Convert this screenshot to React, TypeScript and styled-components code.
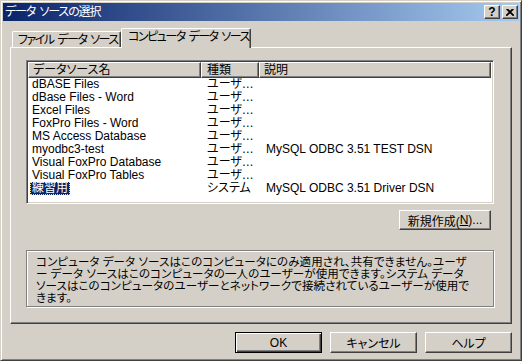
import React from "react";
import styled, { createGlobalStyle } from "styled-components";

const face = "#d4d0c8";
const shadow = "#808080";
const dark = "#404040";

const GlobalStyle = createGlobalStyle`
  html, body {
    margin: 0;
    padding: 0;
    background: ${face};
  }
  body {
    width: 522px;
    height: 361px;
    overflow: hidden;
    font-family: "Liberation Sans", "Noto Sans CJK JP", sans-serif;
    font-size: 12px;
    font-feature-settings: "palt";
    color: #000;
  }
  * {
    box-sizing: border-box;
  }
`;

const sources = [
  { name: "dBASE Files", kind: "ユーザ…", desc: "" },
  { name: "dBase Files - Word", kind: "ユーザ…", desc: "" },
  { name: "Excel Files", kind: "ユーザ…", desc: "" },
  { name: "FoxPro Files - Word", kind: "ユーザ…", desc: "" },
  { name: "MS Access Database", kind: "ユーザ…", desc: "" },
  { name: "myodbc3-test", kind: "ユーザ…", desc: "MySQL ODBC 3.51 TEST DSN" },
  { name: "Visual FoxPro Database", kind: "ユーザ…", desc: "" },
  { name: "Visual FoxPro Tables", kind: "ユーザ…", desc: "" },
  { name: "練習用", kind: "システム", desc: "MySQL ODBC 3.51 Driver DSN", selected: true },
];

const noteLines = [
  "コンピュータ データ ソースはこのコンピュータにのみ適用され、共有できません。ユーザ",
  "ー データ ソースはこのコンピュータの一人のユーザーが使用できます。システム データ",
  "ソースはこのコンピュータのユーザーとネットワークで接続されているユーザーが使用で",
  "きます。",
];

const App = () => (
  <>
    <GlobalStyle />
    <Window>
      <TitleBar>
        <Caption>データ ソースの選択</Caption>
        <CaptionButtons>
          <CaptionButton>
            <HelpMark>?</HelpMark>
          </CaptionButton>
          <CaptionButton>
            <svg width="8" height="7" viewBox="0 0 8 7">
              <path d="M0.5 0 L7.5 7 M1.5 0 L8 6.5 M7.5 0 L0.5 7 M6.5 0 L0 6.5" stroke="#000" strokeWidth="1.1" fill="none" />
            </svg>
          </CaptionButton>
        </CaptionButtons>
      </TitleBar>

      <Body>
        <TabStrip>
          <Tab $width={109}>ファイル データ ソース</Tab>
          <Tab $active $width={130}>コンピュータ データ ソース</Tab>
        </TabStrip>

        <Panel>
          <ListView>
            <HeaderRow>
              <HeaderCell $width={173}>データソース名</HeaderCell>
              <HeaderCell $width={58}>種類</HeaderCell>
              <HeaderCell $width={232}>説明</HeaderCell>
            </HeaderRow>
            {sources.map((s) => (
              <Row key={s.name}>
                <NameCell>
                  <NameText $selected={s.selected}>{s.name}</NameText>
                </NameCell>
                <KindCell>{s.kind}</KindCell>
                <DescCell>{s.desc}</DescCell>
              </Row>
            ))}
          </ListView>

          <ActionRow>
            <PushButton $width={92} $height={20}>
              新規作成(<u>N</u>)...
            </PushButton>
          </ActionRow>

          <Note>
            {noteLines.map((line) => (
              <NoteLine key={line}>{line}</NoteLine>
            ))}
          </Note>
        </Panel>

        <Footer>
          <PushButton $default $width={87} $height={21}>
            OK
          </PushButton>
          <PushButton $width={87} $height={21}>
            キャンセル
          </PushButton>
          <PushButton $width={87} $height={21}>
            ヘルプ
          </PushButton>
        </Footer>
      </Body>
    </Window>
  </>
);

export default App;

const Window = styled.div`
  width: 522px;
  height: 361px;
  display: flex;
  flex-direction: column;
  background: ${face};
  border: 1px solid;
  border-color: ${face} ${dark} ${dark} ${face};
  box-shadow: inset 1px 1px #fff, inset -1px -1px ${shadow};
  padding: 2px;
`;

const TitleBar = styled.div`
  height: 18px;
  display: flex;
  align-items: center;
  justify-content: space-between;
  padding: 0 1px 0 2px;
  background: linear-gradient(to right, #0a246a, #a6caf0);
`;

const Caption = styled.span`
  color: #fff;
  line-height: 18px;
  letter-spacing: -1.1px;
  word-spacing: 2px;
  white-space: nowrap;
`;

const CaptionButtons = styled.div`
  display: flex;
  gap: 2px;
`;

const CaptionButton = styled.div`
  width: 16px;
  height: 14px;
  display: flex;
  align-items: center;
  justify-content: center;
  background: ${face};
  border: 1px solid;
  border-color: #fff ${dark} ${dark} #fff;
  box-shadow: inset -1px -1px ${shadow};
`;

const HelpMark = styled.span`
  font-family: "Liberation Sans", sans-serif;
  font-weight: bold;
  font-size: 12px;
  line-height: 12px;
`;

const Body = styled.div`
  flex: 1;
  display: flex;
  flex-direction: column;
  padding: 7px 7px 0 7px;
`;

const TabStrip = styled.div`
  height: 19px;
  display: flex;
  align-items: flex-end;
  padding-left: 2px;
  position: relative;
  z-index: 1;
`;

const Tab = styled.div<{ $active?: boolean; $width: number }>`
  width: ${({ $width }) => $width}px;
  height: ${({ $active }) => ($active ? 20 : 16)}px;
  margin-bottom: ${({ $active }) => ($active ? -1 : 0)}px;
  padding-left: ${({ $active }) => ($active ? 6 : 5)}px;
  line-height: ${({ $active }) => ($active ? 17 : 16)}px;
  letter-spacing: -1.5px;
  word-spacing: 2px;
  white-space: nowrap;
  overflow: hidden;
  background: ${face};
  border-top: 1px solid #fff;
  border-left: 1px solid #fff;
  border-right: 1px solid ${dark};
  border-radius: 2px 2px 0 0;
  box-shadow: inset -1px 0 ${shadow};
`;

const Panel = styled.div`
  height: 277px;
  display: flex;
  flex-direction: column;
  padding: 12px 0 0 15px;
  border: 1px solid;
  border-color: #fff ${dark} ${dark} #fff;
  box-shadow: inset -1px -1px ${shadow};
`;

const ListView = styled.div`
  width: 468px;
  height: 144px;
  background: #fff;
  border: 1px solid;
  border-color: ${shadow} #fff #fff ${shadow};
  box-shadow: inset 1px 1px ${dark}, inset -1px -1px ${face};
  padding: 1px;
`;

const HeaderRow = styled.div`
  display: flex;
  height: 16px;
`;

const HeaderCell = styled.div<{ $width: number }>`
  width: ${({ $width }) => $width}px;
  height: 16px;
  padding-left: ${({ $width }) => ($width > 150 ? 4 : 5)}px;
  line-height: 14px;
  white-space: nowrap;
  background: ${face};
  border: 1px solid;
  border-color: #fff ${dark} ${dark} #fff;
  box-shadow: inset -1px -1px ${shadow};
`;

const Row = styled.div`
  display: flex;
  height: 13px;
  line-height: 13px;
  white-space: nowrap;
`;

const NameCell = styled.div`
  width: 173px;
  padding-left: 2px;
`;

const NameText = styled.span<{ $selected?: boolean }>`
  display: inline-block;
  height: 13px;
  padding: 0 2px;
  background: ${({ $selected }) => ($selected ? "#0a246a" : "transparent")};
  color: ${({ $selected }) => ($selected ? "#fff" : "#000")};
  outline: ${({ $selected }) => ($selected ? "1px dotted #f5db95" : "none")};
  outline-offset: -1px;
`;

const KindCell = styled.div`
  width: 58px;
  padding-left: 6px;
  overflow: hidden;
`;

const DescCell = styled.div`
  flex: 1;
  padding-left: 7px;
`;

const ActionRow = styled.div`
  width: 468px;
  display: flex;
  justify-content: flex-end;
  padding-right: 3px;
  margin-top: 6px;
`;

const PushButton = styled.div<{ $default?: boolean; $width: number; $height: number }>`
  width: ${({ $width }) => $width}px;
  height: ${({ $height }) => $height}px;
  display: flex;
  align-items: center;
  justify-content: center;
  white-space: nowrap;
  background: ${face};
  border: 1px solid;
  border-color: ${({ $default }) => ($default ? "#000" : `#fff ${dark} ${dark} #fff`)};
  box-shadow: ${({ $default }) =>
    $default
      ? `inset 1px 1px #fff, inset -1px -1px ${dark}, inset -2px -2px ${shadow}`
      : `inset -1px -1px ${shadow}`};

  u {
    text-decoration: underline;
  }
`;

const Note = styled.div`
  width: 468px;
  height: 57px;
  margin-top: 20px;
  padding: 5px 0 0 9px;
  border: 1px solid ${shadow};
  box-shadow: inset 1px 1px #fff, 1px 1px #fff;
  overflow: hidden;
`;

const NoteLine = styled.div`
  height: 12px;
  font-size: 11.5px;
  line-height: 12px;
  letter-spacing: 0.1px;
  white-space: nowrap;
`;

const Footer = styled.div`
  display: flex;
  justify-content: flex-end;
  gap: 8px;
  margin-top: 8px;
`;
